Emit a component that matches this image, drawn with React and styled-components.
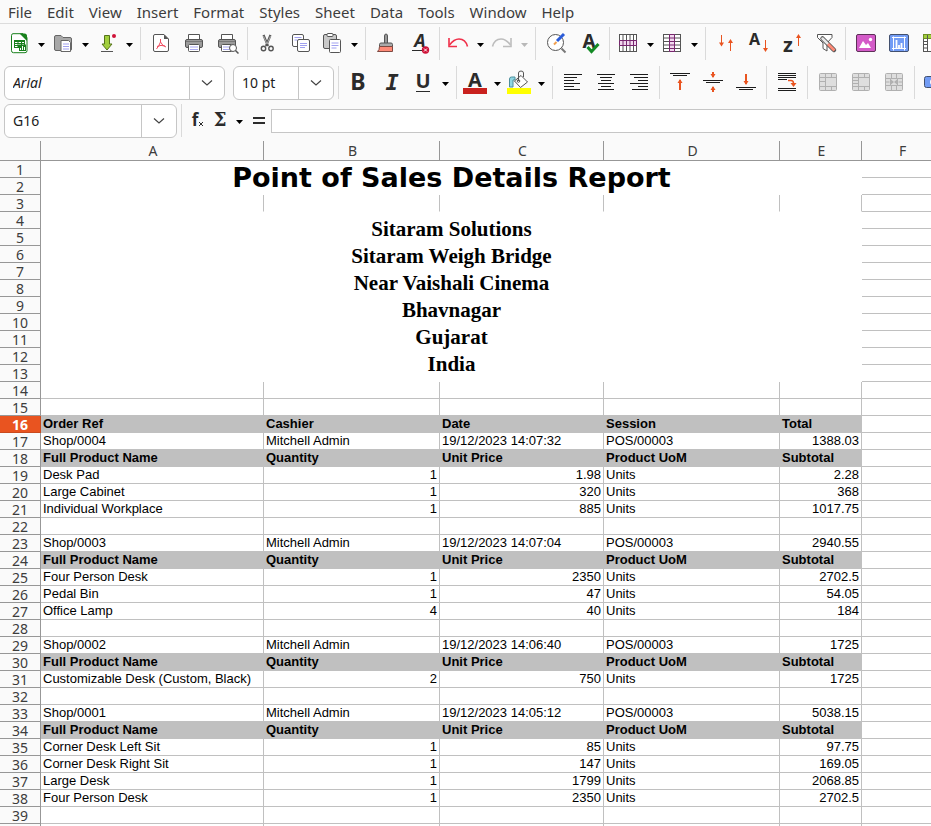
import React from "react";
import styled, { createGlobalStyle, css } from "styled-components";

const UI_FONT = `"Noto Sans", "Open Sans", sans-serif`;
const INK = "#2b2b2b";
const LINE = "#555555";
const ORANGE = "#e95420";
const PLUM = "#78266f";
const GRID = "#c0c0c0";
const HEAD_LINE = "#979797";

const GlobalStyle = createGlobalStyle`
  * { box-sizing: border-box; }
  body {
    margin: 0;
    background: #fafafa;
    color: #3d3d3d;
    font: 14px/20px ${UI_FONT};
    overflow: hidden;
  }
  button, input { font: inherit; color: inherit; }
`;

const Page = styled.div`
  display: flex;
  flex-direction: column;
  height: 100vh;
  overflow: hidden;
  background: #fafafa;
`;

/* ---------- menu ---------- */

const MenuBar = styled.nav`
  display: flex;
  gap: 15px;
  height: 24px;
  padding: 2px 8px 1px;
  border-bottom: 1px solid #dcdcdc;
  flex: none;
`;

const MenuButton = styled.button`
  border: 0;
  padding: 0;
  background: none;
  font-size: 15px;
  line-height: 20px;
`;

/* ---------- toolbars ---------- */

const Toolbar = styled.div`
  display: flex;
  align-items: center;
  height: 39px;
  padding-left: 4px;
  flex: none;
  overflow: hidden;
`;

const ToolButton = styled.button`
  flex: none;
  display: flex;
  width: ${(p) => (p.$split ? 30 : 33)}px;
  height: 33px;
  padding: 4px 0 5px ${(p) => (p.$split ? 3 : 4)}px;
  border: 0;
  background: none;
`;

const DropButton = styled.button`
  flex: none;
  display: flex;
  align-items: center;
  justify-content: center;
  width: 14px;
  height: 33px;
  padding: 3px 0 0;
  border: 0;
  background: none;
`;

const Separator = styled.span`
  flex: none;
  width: 1px;
  height: 33px;
  margin: 0 3px 0 4px;
  background: #dadada;
`;

const ComboBox = styled.div`
  flex: none;
  display: flex;
  width: ${(p) => p.$width}px;
  height: 34px;
  margin-right: ${(p) => p.$after || 0}px;
  border: 1px solid #c6c6c6;
  border-radius: 6px;
  background: #ffffff;
  overflow: hidden;
`;

const ComboInput = styled.input`
  flex: 1;
  min-width: 0;
  border: 0;
  padding: 0 8px;
  background: none;
  color: #1c1c1c;
  outline: 0;
  font-style: ${(p) => (p.$italic ? "italic" : "normal")};
`;

const ComboArrow = styled.button`
  flex: none;
  display: flex;
  align-items: center;
  justify-content: center;
  width: 35px;
  padding: 0;
  border: 0;
  border-left: 1px solid #c6c6c6;
  background: none;
`;

const FormulaBar = styled.div`
  display: flex;
  align-items: center;
  height: 39px;
  padding: 0 0 2px 4px;
  flex: none;
`;

const FormulaButton = styled.button`
  flex: none;
  display: flex;
  align-items: center;
  width: ${(p) => p.$width}px;
  height: 24px;
  padding: 0;
  border: 0;
  background: none;
`;

const FormulaInput = styled.input`
  flex: 1;
  min-width: 0;
  height: 24px;
  padding: 0 4px;
  border: 1px solid #c6c6c6;
  border-right: 0;
  background: #ffffff;
  outline: 0;
`;

/* ---------- icons ---------- */

const Svg = styled.svg`
  display: block;
  flex: none;
  overflow: visible;
  fill: none;
`;

const Icon = ({ children }) => (
  <Svg width="24" height="24" viewBox="0 0 24 24" aria-hidden="true">
    {children}
  </Svg>
);

const Triangle = ({ muted }) => (
  <Svg width="8" height="4" viewBox="0 0 8 4" aria-hidden="true">
    <path d="M1 0h7L4.5 4z" fill={muted ? "#b8b8b8" : "#000"} />
  </Svg>
);

const Chevron = () => (
  <Svg width="12" height="8" viewBox="0 0 12 8" aria-hidden="true">
    <path d="M1 1.5l5 4.5 5-4.5" stroke="#444" strokeWidth="1.2" />
  </Svg>
);

const Glyph = ({ x, y, size, children, family, italic, fill = INK }) => (
  <text
    x={x}
    y={y}
    fill={fill}
    fontFamily={family || "Noto Sans, sans-serif"}
    fontWeight="700"
    fontStyle={italic ? "italic" : "normal"}
    fontSize={size}
    textAnchor="middle"
  >
    {children}
  </text>
);

const Arrow = ({ x, from, to, wide }) => {
  const d = to > from ? -1 : 1;
  return (
    <>
      <path d={`M${x} ${from}V${to + d}`} stroke={ORANGE} strokeWidth={wide ? 2 : 1} />
      <path d={`M${x - 2.5} ${to + d * 4}h5L${x} ${to}z`} fill={ORANGE} />
    </>
  );
};

const Lines = ({ rows }) => (
  <>
    {rows.map(([x1, x2, y]) => (
      <path key={y} d={`M${x1} ${y + 0.5}H${x2}`} stroke="#1c1c1c" />
    ))}
  </>
);

const Printer = () => (
  <>
    <path d="M7.5 9V3.5h11V9" fill="#fff" stroke={LINE} />
    <rect x="4.5" y="8.5" width="17" height="8" rx="1.5" fill="#9b9b9b" stroke={LINE} />
    <path d="M5 10.5h16" stroke="#777" />
    <rect x="7.5" y="13.5" width="11" height="7" rx="1" fill="#fff" stroke={LINE} />
    <path d="M9 16h8M9 18.5h8" stroke="#a9a9f0" />
  </>
);

const MergeFrame = ({ children }) => (
  <>
    <rect x="4.5" y="3.5" width="17" height="17" rx="1" fill="#dedede" stroke="#b0b0b0" />
    {children}
  </>
);

const icons = {
  new: (
    <>
      <path d="M6 2.700h10l4 4v13q0 2-2 2H6.500q-2 0-2-2v-15q0-2 1.500-2z" fill="#fff" stroke="#18801c" />
      <path d="M12.500 2.500h5q2.500 0 2.500 2.500v5z" fill="#18801c" />
      <path d="M7 9h11v8H7z" fill="#18801c" />
      <path d="M8 11.500h2.500M11.500 11.500h2.500M15 11.500h2M8 13.500h2.500M11.500 13.500h2.500M15 13.500h2M8 15.500h2.500" stroke="#fff" />
      <path d="M12 13.500h7V20h-7z" fill="#18801c" />
      <path d="M13.500 19v-2M15.500 19v-4M17.500 19v-3" stroke="#fff" />
    </>
  ),
  open: (
    <>
      <path d="M3.500 18V6q0-1.500 1.500-1.500h5l2 2h7q1.500 0 1.500 1.500v10q0 1.500-1.500 1.500H5q-1.500 0-1.500-1.500z" fill="#a8a8a8" stroke="#666" />
      <path d="M10 9.500h7.500l2 2v9H10z" fill="#fff" stroke="#666" />
      <path d="M12 13h6M12 15.500h6M12 18h6" stroke="#a0a0f0" />
    </>
  ),
  save: (
    <>
      <path d="M9.500 4.500h5v8.500h2.500l-5 6-5-6h2.500z" fill="#a1cf3c" stroke="#55731b" />
      <path d="M6 20.500h12" stroke="#555" />
      <circle cx="19" cy="5" r="2" fill="#cf1238" />
    </>
  ),
  pdf: (
    <>
      <path d="M7 3.500h9l4.500 4.500v11q0 1.500-1.500 1.500H7q-1.500 0-1.500-1.500V5q0-1.500 1.500-1.500z" fill="#fff" stroke={LINE} />
      <path d="M16 3.500V8h4.500z" fill={LINE} />
      <path d="M12.500 8v3q-1.500 4-4 7M12.500 11q2 4 5.500 5M9 15.500q4-2 8-.5" stroke="#f04a5e" />
    </>
  ),
  print: <Printer />,
  preview: (
    <>
      <Printer />
      <circle cx="19" cy="17" r="3.500" fill="#fff" stroke={LINE} />
      <path d="M21.500 19.500l3 3" stroke={LINE} strokeWidth="1.500" />
    </>
  ),
  cut: (
    <>
      <path d="M8.500 4l4.500 11M15.500 4L11 15" stroke={LINE} strokeWidth="2.200" />
      <path d="M8.500 5l3.500 8M15.500 5L12 13" stroke="#ccc" strokeWidth=".7" />
      <circle cx="8.500" cy="17.500" r="2.200" stroke={LINE} strokeWidth="1.400" />
      <circle cx="16" cy="17.500" r="2.200" stroke={LINE} strokeWidth="1.400" />
    </>
  ),
  copy: (
    <>
      <rect x="4.500" y="3.500" width="11" height="12" rx="1.500" fill="#fff" stroke={LINE} />
      <path d="M6.500 6.500h7M6.500 9h3" stroke="#a0a0f0" />
      <rect x="9.500" y="8.500" width="12" height="12" rx="1.500" fill="#fff" stroke={LINE} />
      <path d="M12 12.500h7M12 14.500h7M12 16.500h5" stroke="#a0a0f0" />
    </>
  ),
  paste: (
    <>
      <rect x="3.500" y="3.500" width="13" height="14" rx="1.500" fill="#c9c9c9" stroke={LINE} />
      <rect x="7" y="2.500" width="6" height="3" rx="1" fill="#fff" stroke={LINE} />
      <rect x="9.500" y="8.500" width="11" height="13" rx="1" fill="#fff" stroke={LINE} />
      <path d="M11.500 12h7M11.500 14.500h7M11.500 17h5" stroke="#a0a0f0" />
    </>
  ),
  brush: (
    <>
      <path d="M11.500 12V5q0-2 1.500-2t1.500 2v7" fill="#999" stroke={LINE} />
      <path d="M6.500 15.500v-2q0-1.500 1.500-1.500h10q1.500 0 1.500 1.500v2z" fill="#aaa" stroke={LINE} />
      <path d="M6.500 15.500h13v5h-15q2-1.500 2-5z" fill="#ff8a77" stroke="#7e4a42" />
    </>
  ),
  clear: (
    <>
      <Glyph x={14} y={16} size={18} italic>A</Glyph>
      <path d="M6 19.500h10" stroke={INK} />
      <circle cx="19.500" cy="19" r="3.700" fill="#cf1238" />
      <path d="M18 17.500l3 3M21 17.500l-3 3" stroke="#fff" />
    </>
  ),
  undo: (
    <>
      <path d="M3.500 14Q8 8 13 8q6.500 0 8.500 7.500" stroke="#f0304a" strokeWidth="1.600" />
      <path d="M3 7v8.500h8" stroke="#f0304a" strokeWidth="1.600" />
    </>
  ),
  redo: (
    <>
      <path d="M20.500 14Q16 8 11 8q-6.500 0-8.500 7.500" stroke="#bdbdbd" strokeWidth="1.600" />
      <path d="M21 7v8.500h-8" stroke="#bdbdbd" strokeWidth="1.600" />
    </>
  ),
  find: (
    <>
      <circle cx="12.500" cy="11.500" r="8" fill="#fff" stroke={LINE} />
      <path d="M18.500 17.500l4 4" stroke="#777" strokeWidth="2" />
      <path d="M14 10l7-7" stroke="#2a5bd7" strokeWidth="3" />
      <path d="M11 13.500l2.500-2.500" stroke="#f0a050" strokeWidth="2" />
    </>
  ),
  spell: (
    <>
      <Glyph x={13} y={17} size={19}>A</Glyph>
      <path d="M11.500 16l4 4.500 7-7.500" stroke="#138a24" strokeWidth="3" />
    </>
  ),
  row: (
    <>
      <rect x="3.500" y="3.500" width="17" height="17" fill="#fff" stroke={LINE} />
      <path d="M7 4v17M10.500 4v17M14 4v17M17.500 4v17" stroke={LINE} />
      <path d="M3.500 9.500h17v5h-17z" fill="#f1d8ee" stroke={PLUM} />
      <path d="M7 9v6M10.500 9v6M14 9v6M17.500 9v6" stroke={PLUM} />
    </>
  ),
  column: (
    <>
      <rect x="3.500" y="3.500" width="17" height="17" fill="#fff" stroke={LINE} />
      <path d="M4 7h17M4 10.500h17M4 14h17M4 17.500h17" stroke={LINE} />
      <path d="M9.500 3.500h5v17h-5z" fill="#f1d8ee" stroke={PLUM} />
      <path d="M9 7h6M9 10.500h6M9 14h6M9 17.500h6" stroke={PLUM} />
    </>
  ),
  sort: (
    <>
      <Arrow x={8.5} from={4} to={15.5} />
      <Arrow x={17.5} from={20} to={8} />
    </>
  ),
  sortAsc: (
    <>
      <Glyph x={8.5} y={14} size={16}>A</Glyph>
      <Arrow x={19.5} from={9} to={21} />
    </>
  ),
  sortDesc: (
    <>
      <Glyph x={9} y={21} size={20}>z</Glyph>
      <Arrow x={19.5} from={15} to={3} />
    </>
  ),
  filter: (
    <>
      <path d="M5.500 3.500h14.500v3l-5 5.500v8l-4-2.500V12L5.500 6.500z" fill="#fff" stroke={LINE} />
      <path d="M10.500 7.500L22 19" stroke={LINE} strokeWidth="4.500" strokeLinecap="round" />
      <path d="M10.500 7.500l5 5" stroke="#e9e9e9" strokeWidth="2.500" strokeLinecap="round" />
      <path d="M16 13l6.500 6.500" stroke="#ff8a77" strokeWidth="2.800" />
    </>
  ),
  image: (
    <>
      <rect x="3.500" y="3.500" width="19" height="17" rx="1.500" fill="#d45bc8" stroke="#5d3058" />
      <path d="M6 17l4-7 3 4 2-2 3 5z" fill="#fff" />
      <circle cx="17.500" cy="8.500" r="1.700" fill="#fff" />
    </>
  ),
  chart: (
    <>
      <rect x="3.500" y="3.500" width="19" height="17" rx="1.500" fill="#729cf5" stroke="#42506e" />
      <path d="M6 6.500h14M6 17.500h14M7.500 5.500v14M18.500 5.500v14" stroke="#fff" />
      <path d="M10.500 17V9M13 17v-3M15.500 17v-5" stroke="#fff" strokeWidth="1.800" />
    </>
  ),
  pivot: (
    <>
      <rect x="4.500" y="3.500" width="17" height="17" fill="#fff" stroke={LINE} />
      <path d="M4.500 3.500h17v4h-17z" fill="#a1cf3c" stroke="#6f9121" />
      <path d="M8.500 4v16M4.500 10.500h4M4.500 13.500h4M4.500 17h4" stroke={LINE} />
    </>
  ),
  bold: <Glyph x={12} y={20} size={23}>B</Glyph>,
  italic: <Glyph x={13} y={20} size={22} italic family="DejaVu Sans Mono">I</Glyph>,
  underline: (
    <>
      <Glyph x={12} y={18} size={20}>U</Glyph>
      <path d="M5 21.500h14" stroke={INK} />
    </>
  ),
  fontColor: (
    <>
      <Glyph x={12} y={17} size={20}>A</Glyph>
      <path d="M0 18h24v6H0z" fill="#c9211e" />
    </>
  ),
  fill: (
    <>
      <path d="M2.500 17V9q0-2 2-2H8v3H6v7z" fill="#8fd6e3" stroke="#4d8f9c" />
      <path d="M14 5.500l6.500 6.500-7 5.500-6-6.500z" fill="#fff" stroke={LINE} />
      <path d="M11.500 11V3q0-2 2.500-2t2.500 2v4" stroke={LINE} />
      <circle cx="11.500" cy="11" r="1.300" stroke={LINE} />
      <path d="M0 18h24v6H0z" fill="#ffff00" />
    </>
  ),
  left: <Lines rows={[[4, 22, 4], [4, 17, 7], [4, 14, 10], [4, 20, 13], [4, 14, 16], [4, 20, 19]]} />,
  center: <Lines rows={[[4, 22, 4], [7, 19, 7], [8, 18, 10], [5, 21, 13], [8, 18, 16], [5, 21, 19]]} />,
  right: <Lines rows={[[4, 22, 4], [8, 22, 7], [12, 22, 10], [4, 22, 13], [12, 22, 16], [6, 22, 19]]} />,
  top: (
    <>
      <Lines rows={[[3, 23, 3], [6, 20, 5]]} />
      <Arrow x={13} from={20} to={9} wide />
    </>
  ),
  middle: (
    <>
      <Lines rows={[[3, 23, 10], [6, 20, 12]]} />
      <Arrow x={13} from={2} to={8} wide />
      <Arrow x={13} from={22} to={16} wide />
    </>
  ),
  bottom: (
    <>
      <Arrow x={13} from={4} to={15} wide />
      <Lines rows={[[3, 23, 17], [6, 20, 19]]} />
    </>
  ),
  wrap: (
    <>
      <Lines rows={[[4, 22, 3], [4, 22, 5], [4, 22, 7], [4, 13, 9], [4, 22, 18], [4, 22, 20]]} />
      <path d="M14 10.500h3q2.500 0 2.500 3" stroke={ORANGE} strokeWidth="1.500" />
      <path d="M16.500 13h6l-3 4z" fill={ORANGE} />
    </>
  ),
  mergeCenter: (
    <MergeFrame>
      <path d="M10.500 3.500v17M4.500 7.500h17M4.500 11.500h6M4.500 16.500h17M16.500 3.500v4M16.500 16.500v4" stroke="#b0b0b0" />
    </MergeFrame>
  ),
  merge: (
    <MergeFrame>
      <path d="M10.500 3.500v17M4.500 7.500h17M4.500 10.500h6M4.500 13.500h6M4.500 16.500h17M16.500 3.500v4M16.500 16.500v4" stroke="#b0b0b0" />
    </MergeFrame>
  ),
  unmerge: (
    <MergeFrame>
      <path d="M9.500 8.500h7v7h-7zM4.500 8.500h5M16.500 8.500h5M4.500 15.500h5M16.500 15.500h5M10.500 3.500v5M15.500 3.500v5M10.500 15.500v5M15.500 15.500v5M4.500 12h4M17.500 12h4" stroke="#b0b0b0" />
      <path d="M10 9.500l3 2.500-3 2.500zM16 9.500l-3 2.500 3 2.500z" fill="#b0b0b0" />
    </MergeFrame>
  ),
  currency: (
    <>
      <rect x="2.500" y="6.500" width="20" height="11" rx="2" fill="#729cf5" stroke="#42506e" />
      <circle cx="11" cy="12" r="3" fill="#fff" />
    </>
  ),
};

const SEP = "sep";
const split = (icon, label, muted) => ({ icon, label, split: true, muted });
const tool = (icon, label) => ({ icon, label });

const standardTools = [
  split("new", "New"), split("open", "Open"), split("save", "Save"), SEP,
  tool("pdf", "Export as PDF"), tool("print", "Print"), tool("preview", "Print Preview"), SEP,
  tool("cut", "Cut"), tool("copy", "Copy"), split("paste", "Paste"), SEP,
  tool("brush", "Clone Formatting"), tool("clear", "Clear Formatting"), SEP,
  split("undo", "Undo"), split("redo", "Redo", true), SEP,
  tool("find", "Find and Replace"), tool("spell", "Spelling"), SEP,
  split("row", "Row"), split("column", "Column"), SEP,
  tool("sort", "Sort"), tool("sortAsc", "Sort Ascending"), tool("sortDesc", "Sort Descending"), tool("filter", "AutoFilter"), SEP,
  tool("image", "Insert Image"), tool("chart", "Insert Chart"), tool("pivot", "Insert Pivot Table"),
];

const formatTools = [
  SEP,
  tool("bold", "Bold"), tool("italic", "Italic"), split("underline", "Underline"), SEP,
  split("fontColor", "Font Color"), split("fill", "Background Color"), SEP,
  tool("left", "Align Left"), tool("center", "Center Horizontally"), tool("right", "Align Right"), SEP,
  tool("top", "Align Top"), tool("middle", "Center Vertically"), tool("bottom", "Align Bottom"), SEP,
  tool("wrap", "Wrap Text"), SEP,
  tool("mergeCenter", "Merge and Center Cells"), tool("merge", "Merge Cells"), tool("unmerge", "Unmerge Cells"), SEP,
  tool("currency", "Format as Currency"),
];

const Tools = ({ items }) =>
  items.map((item, i) =>
    item === SEP ? (
      <Separator key={i} />
    ) : (
      <React.Fragment key={i}>
        <ToolButton type="button" $split={item.split} aria-label={item.label}>
          <Icon>{icons[item.icon]}</Icon>
        </ToolButton>
        {item.split && (
          <DropButton type="button" aria-label={`${item.label} options`}>
            <Triangle muted={item.muted} />
          </DropButton>
        )}
      </React.Fragment>
    )
  );

const Combo = ({ label, value, width, after, italic }) => (
  <ComboBox $width={width} $after={after}>
    <ComboInput aria-label={label} defaultValue={value} $italic={italic} />
    <ComboArrow type="button" aria-label={`${label} list`}>
      <Chevron />
    </ComboArrow>
  </ComboBox>
);

/* ---------- sheet ---------- */

const SheetArea = styled.main`
  flex: 1;
  min-height: 0;
  overflow: hidden;
`;

const Grid = styled.table`
  width: 100%;
  min-width: 900px;
  table-layout: fixed;
  border-collapse: separate;
  border-spacing: 0;
  background: #ffffff;
`;

const Col = styled.col`
  width: ${(p) => (p.$width ? `${p.$width}px` : "auto")};
`;

const ColumnHead = styled.th`
  height: 20px;
  padding: 0 0 0 2px;
  border-right: 1px solid ${HEAD_LINE};
  border-bottom: 1px solid ${HEAD_LINE};
  background: #fafafa;
  font-weight: 400;
  line-height: 19px;
`;

const LastColumnHead = styled(ColumnHead)`
  border-right: 0;
  padding-left: 37px;
  text-align: left;
`;

const RowHead = styled.th`
  height: 17px;
  padding: 2px 0 0;
  border-right: 1px solid ${HEAD_LINE};
  border-bottom: 1px solid ${HEAD_LINE};
  background: #fafafa;
  font-weight: 400;
  line-height: 14px;
  ${(p) =>
    p.$active &&
    css`
      border-color: #c94a1e;
      background: ${ORANGE};
      color: #ffffff;
      font-weight: 700;
    `}
`;

const Cell = styled.td`
  height: 17px;
  padding: 0 2px;
  border-right: 1px solid ${GRID};
  border-bottom: 1px solid ${GRID};
  background: ${(p) => (p.$head ? GRID : "#ffffff")};
  color: #000000;
  font-family: "Liberation Sans", Arial, sans-serif;
  font-size: 13px;
  font-weight: ${(p) => (p.$head ? 700 : 400)};
  line-height: 16px;
  text-align: ${(p) => (p.$number ? "right" : "left")};
  white-space: nowrap;
  ${(p) => p.$openBottom && css`border-bottom-color: #ffffff;`}
`;

const EdgeCell = styled(Cell)`
  border-right: 0;
`;

const TitleCell = styled.td`
  padding: 0;
  color: #000000;
  font: 700 27px/32px "DejaVu Sans", sans-serif;
  text-align: center;
`;

const AddressCell = styled.td`
  padding: 0;
  color: #000000;
  font: 700 21px/27px "Liberation Serif", serif;
  text-align: center;
`;

const AddressLine = styled.div``;

const menus = ["File", "Edit", "View", "Insert", "Format", "Styles", "Sheet", "Data", "Tools", "Window", "Help"];

const address = [
  "Sitaram Solutions",
  "Sitaram Weigh Bridge",
  "Near Vaishali Cinema",
  "Bhavnagar",
  "Gujarat",
  "India",
];

const orderHead = { head: true, cells: ["Order Ref", "Cashier", "Date", "Session", "Total"] };
const productHead = { head: true, cells: ["Full Product Name", "Quantity", "Unit Price", "Product UoM", "Subtotal"] };
const order = (ref, time, total) => ({
  cells: [ref, "Mitchell Admin", `19/12/2023 ${time}`, "POS/00003", total],
});
const product = (name, quantity, price, subtotal) => ({ cells: [name, quantity, price, "Units", subtotal] });
const blank = { cells: ["", "", "", "", ""] };

const dataRows = [
  blank,
  blank,
  orderHead,
  order("Shop/0004", "14:07:32", 1388.03),
  productHead,
  product("Desk Pad", 1, 1.98, 2.28),
  product("Large Cabinet", 1, 320, 368),
  product("Individual Workplace", 1, 885, 1017.75),
  blank,
  order("Shop/0003", "14:07:04", 2940.55),
  productHead,
  product("Four Person Desk", 1, 2350, 2702.5),
  product("Pedal Bin", 1, 47, 54.05),
  product("Office Lamp", 4, 40, 184),
  blank,
  order("Shop/0002", "14:06:40", 1725),
  productHead,
  product("Customizable Desk (Custom, Black)", 2, 750, 1725),
  blank,
  order("Shop/0001", "14:05:12", 5038.15),
  productHead,
  product("Corner Desk Left Sit", 1, 85, 97.75),
  product("Corner Desk Right Sit", 1, 147, 169.05),
  product("Large Desk", 1, 1799, 2068.85),
  product("Four Person Desk", 1, 2350, 2702.5),
  blank,
];

const FIRST_DATA_ROW = 14;
const ACTIVE_ROW = 16;
const columns = [
  ["A", 223],
  ["B", 176],
  ["C", 164],
  ["D", 176],
  ["E", 82],
];

const HeaderRows = () =>
  Array.from({ length: FIRST_DATA_ROW - 1 }, (_, i) => i + 1).map((n) => (
    <tr key={n}>
      <RowHead scope="row">{n}</RowHead>
      {n === 1 && (
        <TitleCell colSpan={5} rowSpan={2}>
          Point of Sales Details Report
        </TitleCell>
      )}
      {n === 3 && columns.map(([name]) => <Cell key={name} $openBottom />)}
      {n === 4 && (
        <AddressCell colSpan={5} rowSpan={10}>
          {address.map((line) => (
            <AddressLine key={line}>{line}</AddressLine>
          ))}
        </AddressCell>
      )}
      <EdgeCell />
    </tr>
  ));

const DataRows = () =>
  dataRows.map((row, i) => {
    const n = FIRST_DATA_ROW + i;
    return (
      <tr key={n}>
        <RowHead scope="row" $active={n === ACTIVE_ROW}>
          {n}
        </RowHead>
        {row.cells.map((value, c) => (
          <Cell key={c} $head={row.head} $number={typeof value === "number"}>
            {value}
          </Cell>
        ))}
        <EdgeCell />
      </tr>
    );
  });

const TrailingRow = () => (
  <tr>
    <RowHead as="td" />
    {columns.map(([name]) => (
      <Cell key={name} />
    ))}
    <EdgeCell />
  </tr>
);

export default function App() {
  return (
    <Page>
      <GlobalStyle />
      <MenuBar aria-label="Main menu">
        {menus.map((name) => (
          <MenuButton type="button" key={name}>
            {name}
          </MenuButton>
        ))}
      </MenuBar>
      <Toolbar role="toolbar" aria-label="Standard">
        <Tools items={standardTools} />
      </Toolbar>
      <Toolbar role="toolbar" aria-label="Formatting">
        <Combo label="Font name" value="Arial" width={221} after={8} italic />
        <Combo label="Font size" value="10 pt" width={101} />
        <Tools items={formatTools} />
      </Toolbar>
      <FormulaBar>
        <Combo label="Name box" value="G16" width={173} />
        <Separator />
        <FormulaButton type="button" $width={27} aria-label="Function wizard">
          <Icon>
            <Glyph x={10} y={17} size={17}>f</Glyph>
            <path d="M14 13l4 4M18 13l-4 4" stroke={INK} />
          </Icon>
        </FormulaButton>
        <FormulaButton type="button" $width={20} aria-label="Select function">
          <Icon>
            <Glyph x={8} y={17} size={18} family="DejaVu Serif">Σ</Glyph>
          </Icon>
        </FormulaButton>
        <DropButton type="button" aria-label="Select function options">
          <Triangle />
        </DropButton>
        <FormulaButton type="button" $width={25} aria-label="Formula">
          <Icon>
            <path d="M7 9h12M7 14h12" stroke={INK} strokeWidth="2" />
          </Icon>
        </FormulaButton>
        <FormulaInput aria-label="Input line" />
      </FormulaBar>
      <SheetArea>
        <Grid>
          <colgroup>
            <Col $width={41} />
            {columns.map(([name, width]) => (
              <Col key={name} $width={width} />
            ))}
            <Col />
          </colgroup>
          <thead>
            <tr>
              <ColumnHead aria-label="Select all" />
              {columns.map(([name]) => (
                <ColumnHead key={name} scope="col">
                  {name}
                </ColumnHead>
              ))}
              <LastColumnHead scope="col">F</LastColumnHead>
            </tr>
          </thead>
          <tbody>
            <HeaderRows />
            <DataRows />
            <TrailingRow />
          </tbody>
        </Grid>
      </SheetArea>
    </Page>
  );
}
